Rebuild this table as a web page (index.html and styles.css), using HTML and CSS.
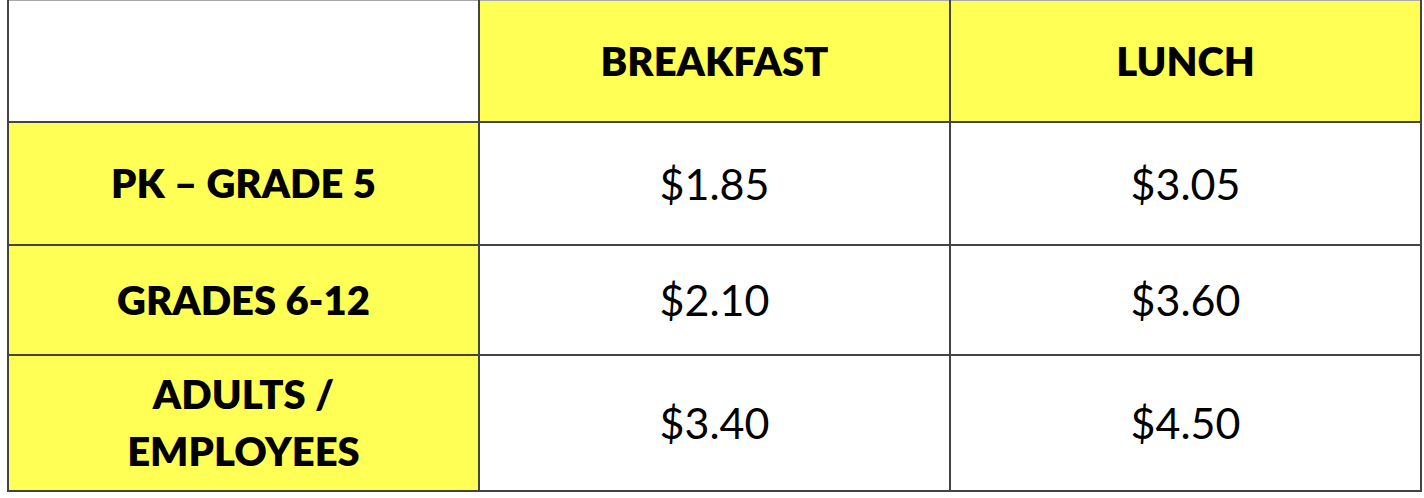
FILE: index.html
```html
<!DOCTYPE html>
<html>
<head>
<meta charset="utf-8">
<link rel="stylesheet" href="styles.css">
</head>
<body>
<table class="prices">
  <colgroup><col class="c"><col class="c"><col class="c"></colgroup>
  <tr class="head">
    <td class="blank"></td>
    <th class="hl">BREAKFAST</th>
    <th class="hl">LUNCH</th>
  </tr>
  <tr class="r1">
    <th class="hl">PK – GRADE 5</th>
    <td>$1.85</td>
    <td>$3.05</td>
  </tr>
  <tr class="r2">
    <th class="hl">GRADES 6-12</th>
    <td>$2.10</td>
    <td>$3.60</td>
  </tr>
  <tr class="r3">
    <th class="hl tall">ADULTS /<br>EMPLOYEES</th>
    <td>$3.40</td>
    <td>$4.50</td>
  </tr>
</table>
</body>
</html>
```
FILE: styles.css
```css
html, body {
  margin: 0;
  padding: 0;
  background: #fff;
}
body {
  padding-left: 7px;
}
.prices {
  border-collapse: collapse;
  table-layout: fixed;
  width: 1413px;
  font-family: "Lato", "Open Sans", sans-serif;
  color: #000;
}
.prices .c {
  width: 471px;
}
.prices td, .prices th {
  border: 2px solid #444;
  text-align: center;
  vertical-align: middle;
  padding: 0;
}
.prices tr.head td, .prices tr.head th {
  border-top: 1px solid #aaa;
}
.prices th {
  font-weight: 800;
  font-size: 40px;
  line-height: 48px;
}
.prices th.tall {
  line-height: 57px;
}
.prices td {
  font-weight: 400;
  font-size: 43px;
}
.hl {
  background: #ffff55;
}
.head { height: 121px; }
.r1 { height: 123px; }
.r2 { height: 110px; }
.r3 { height: 136px; }
```
